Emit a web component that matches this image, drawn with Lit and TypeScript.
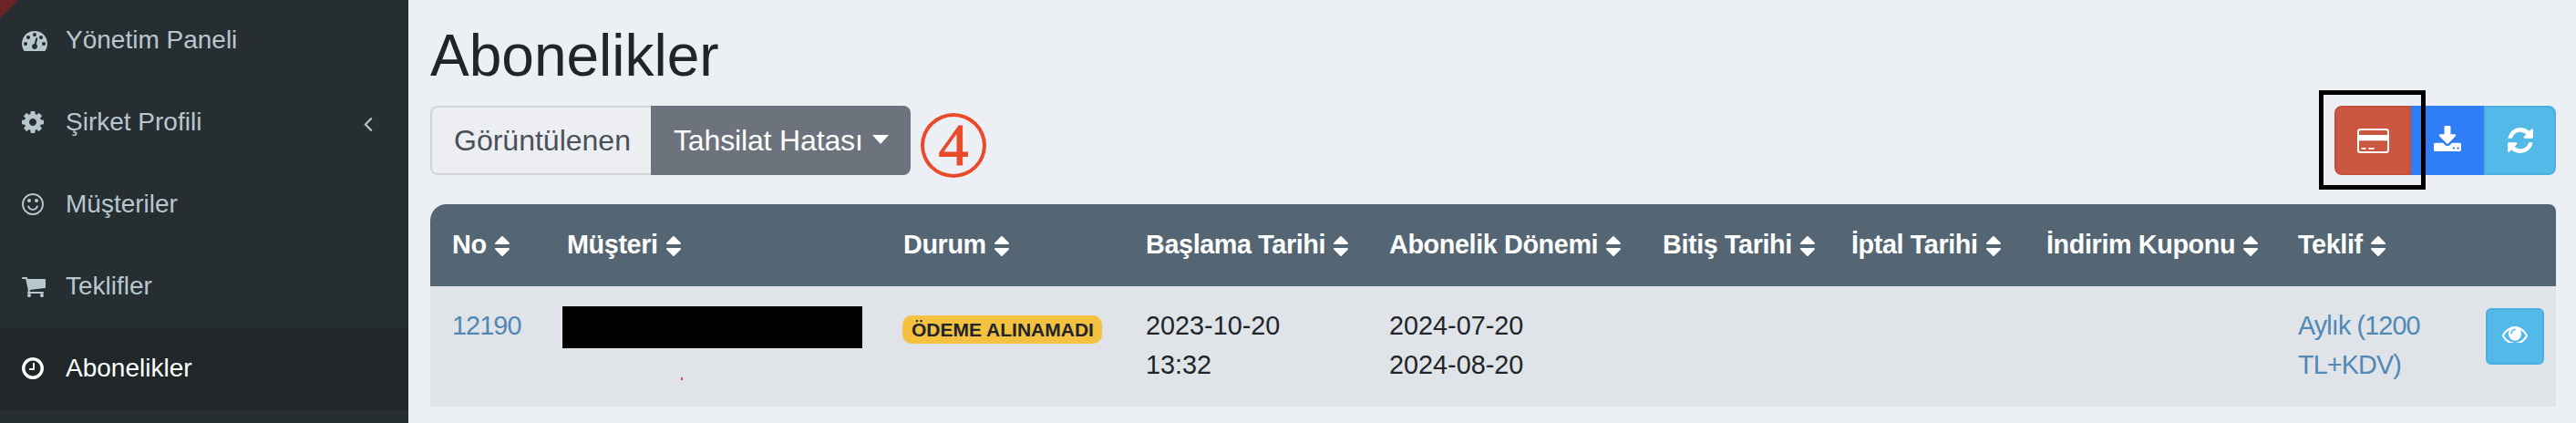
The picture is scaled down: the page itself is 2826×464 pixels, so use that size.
import { LitElement, html, css, svg } from "lit";
import { customElement } from "lit/decorators.js";

const P = {
  dash: "M384 1152q0-53-37.5-90.5t-90.5-37.5-90.5 37.5-37.5 90.5 37.5 90.5 90.5 37.5 90.5-37.5 37.5-90.5zm192-448q0-53-37.5-90.5t-90.5-37.5-90.5 37.5-37.5 90.5 37.5 90.5 90.5 37.5 90.5-37.5 37.5-90.5zm428 481l101-382q6-26-7.5-48.5t-38.5-29.5-48 6.5-30 39.5l-101 382q-60 5-107 43.5t-63 98.5q-20 77 20 146t117 89 146-20 89-117q16-60-6-117t-72-91zm660-33q0-53-37.5-90.5t-90.5-37.5-90.5 37.5-37.5 90.5 37.5 90.5 90.5 37.5 90.5-37.5 37.5-90.5zm-640-640q0-53-37.5-90.5t-90.5-37.5-90.5 37.5-37.5 90.5 37.5 90.5 90.5 37.5 90.5-37.5 37.5-90.5zm448 192q0-53-37.5-90.5t-90.5-37.5-90.5 37.5-37.5 90.5 37.5 90.5 90.5 37.5 90.5-37.5 37.5-90.5zm320 448q0 261-141 483-19 29-54 29h-1402q-35 0-54-29-141-221-141-483 0-182 71-348t191-286 286-191 348-71 348 71 286 191 191 286 71 348z",
  cog: "M1152 896q0-106-75-181t-181-75-181 75-75 181 75 181 181 75 181-75 75-181zm512-109v222q0 12-8 23t-20 13l-185 28q-19 54-39 91 35 50 107 138 10 12 10 25t-9 23q-27 37-99 108t-94 71q-12 0-26-9l-138-108q-44 23-91 38-16 136-29 186-7 28-36 28h-222q-14 0-24.5-8.5t-11.5-21.5l-28-184q-49-16-90-37l-141 107q-10 9-25 9-14 0-25-11-126-114-165-168-7-10-7-23 0-12 8-23 15-21 51-66.5t54-70.5q-27-50-41-99l-183-27q-13-2-21-12.5t-8-23.5v-222q0-12 8-23t19-13l186-28q14-46 39-92-40-57-107-138-10-12-10-24 0-10 9-23 26-36 98.5-107.5t94.5-71.5q13 0 26 10l138 107q44-23 91-38 16-136 29-186 7-28 36-28h222q14 0 24.5 8.5t11.5 21.5l28 184q49 16 90 37l142-107q9-9 24-9 13 0 25 10 129 119 165 170 7 8 7 22 0 12-8 23-15 21-51 66.5t-54 70.5q26 50 41 98l183 28q13 2 21 12.5t8 23.5z",
  smile: "M1262 1075q-37 121-138 195t-228 74-228-74-138-195q-8-25 4-48.5t38-31.5q25-8 48.5 4t31.5 38q25 80 92.5 129.5t151.5 49.5 151.5-49.5 92.5-129.5q8-26 32-38t49-4 37 31.5 4 48.5zm-494-435q0 53-37.5 90.5t-90.5 37.5-90.5-37.5-37.5-90.5 37.5-90.5 90.5-37.5 90.5 37.5 37.5 90.5zm512 0q0 53-37.5 90.5t-90.5 37.5-90.5-37.5-37.5-90.5 37.5-90.5 90.5-37.5 90.5 37.5 37.5 90.5zm256 256q0-130-51-248.5t-136.5-204-204-136.5-248.5-51-248.5 51-204 136.5-136.5 204-51 248.5 51 248.5 136.5 204 204 136.5 248.5 51 248.5-51 204-136.5 136.5-204 51-248.5zm128 0q0 209-103 385.5t-279.5 279.5-385.5 103-385.5-103-279.5-279.5-103-385.5 103-385.5 279.5-279.5 385.5-103 385.5 103 279.5 279.5 103 385.5z",
  cart: "M704 1536q0 52-38 90t-90 38-90-38-38-90 38-90 90-38 90 38 38 90zm896 0q0 52-38 90t-90 38-90-38-38-90 38-90 90-38 90 38 38 90zm128-1088v512q0 24-16.5 42.5t-40.5 21.5l-1044 122q13 60 13 70 0 16-24 64h920q26 0 45 19t19 45-19 45-45 19h-1024q-26 0-45-19t-19-45q0-11 8-31.5t16-36 21.5-40 15.5-29.5l-177-823h-204q-26 0-45-19t-19-45 19-45 45-19h256q16 0 28.5 6.5t19.5 15.5 13 24.5 8 26 5.5 29.5 4.5 26h1201q26 0 45 19t19 45z",
  clock: "M1024 544v448q0 14-9 23t-23 9h-320q-14 0-23-9t-9-23v-64q0-14 9-23t23-9h224v-352q0-14 9-23t23-9h64q14 0 23 9t9 23zm416 352q0-148-73-273t-198-198-273-73-273 73-198 198-73 273 73 273 198 198 273 73 273-73 198-198 73-273zm224 0q0 209-103 385.5t-279.5 279.5-385.5 103-385.5-103-279.5-279.5-103-385.5 103-385.5 279.5-279.5 385.5-103 385.5 103 279.5 279.5 103 385.5z",
  sort: "M1408 1088q0 26-19 45l-448 448q-19 19-45 19t-45-19l-448-448q-19-19-19-45t19-45 45-19h896q26 0 45 19t19 45zm0-384q0 26-19 45t-45 19h-896q-26 0-45-19t-19-45 19-45l448-448q19-19 45-19t45 19l448 448q19 19 19 45z",
  refresh: "M1639 1056q0 5-1 7-64 268-268 434.5t-478 166.5q-146 0-282.5-55t-243.5-157l-129 129q-19 19-45 19t-45-19-19-45v-448q0-26 19-45t45-19h448q26 0 45 19t19 45-19 45l-137 137q71 66 161 102t187 36q134 0 250-65t186-179q11-17 53-117 8-23 30-23h192q13 0 22.5 9.5t9.5 22.5zm25-800v448q0 26-19 45t-45 19h-448q-26 0-45-19t-19-45 19-45l138-138q-148-137-349-137-134 0-250 65t-186 179q-11 17-53 117-8 23-30 23h-199q-13 0-22.5-9.5t-9.5-22.5v-7q65-268 270-434.5t480-166.5q146 0 284 55.5t245 156.5l130-129q19-19 45-19t45 19 19 45z",
  download: "M1344 1344q0-26-19-45t-45-19-45 19-19 45 19 45 45 19 45-19 19-45zm256 0q0-26-19-45t-45-19-45 19-19 45 19 45 45 19 45-19 19-45zm128-224v320q0 40-28 68t-68 28h-1472q-40 0-68-28t-28-68v-320q0-40 28-68t68-28h465l135 136q58 56 136 56t136-56l136-136h464q40 0 68 28t28 68zm-325-569q17 41-14 70l-448 448q-18 19-45 19t-45-19l-448-448q-31-29-14-70 17-39 59-39h256v-448q0-26 19-45t45-19h256q26 0 45 19t19 45v448h256q42 0 59 39z",
  eye: "M1664 960q-152-236-381-353 61 104 61 225 0 185-131.5 316.5t-316.5 131.5-316.5-131.5-131.5-316.5q0-121 61-225-229 117-381 353 133 205 333.5 326.5t434.5 121.5 434.5-121.5 333.5-326.5zm-720-384q0-20-14-34t-34-14q-125 0-214.5 89.5t-89.5 214.5q0 20 14 34t34 14 34-14 14-34q0-86 61-147t147-61q20 0 34-14t14-34zm848 384q0 34-20 69-140 230-376.5 368.5t-499.5 138.5-499.5-139-376.5-368q-20-35-20-69t20-69q140-229 376.5-368t499.5-139 499.5 139 376.5 368q20 35 20 69z",
};

const icon = (d: string, vb: string, cls: string) =>
  html`<svg class=${cls} viewBox=${vb} preserveAspectRatio="none" fill="currentColor" aria-hidden="true">${svg`<path d=${d}></path>`}</svg>`;

const NAV = [
  { label: "Yönetim Paneli", d: P.dash, vb: "0 0 1792 1792", cls: "nv w28" },
  { label: "Şirket Profili", d: P.cog, vb: "128 0 1536 1792", cls: "nv w24", more: true },
  { label: "Müşteriler", d: P.smile, vb: "128 0 1536 1792", cls: "nv w24" },
  { label: "Teklifler", d: P.cart, vb: "64 0 1664 1792", cls: "nv w26" },
  { label: "Abonelikler", d: P.clock, vb: "128 0 1536 1792", cls: "nv w24", active: true },
];

const COLS = ["No", "Müşteri", "Durum", "Başlama Tarihi", "Abonelik Dönemi", "Bitiş Tarihi", "İptal Tarihi", "İndirim Kuponu", "Teklif"];

@customElement("app-root")
export class AppRoot extends LitElement {
  static styles = css`
    :host {
      display: flex;
      width: 2826px;
      height: 464px;
      overflow: hidden;
      background: #ecf0f5;
      font-family: "Liberation Sans", Arial, sans-serif;
      color: #212529;
    }
    * { box-sizing: border-box; }
    .side {
      flex: 0 0 448px;
      background: #262e32;
      position: relative;
    }
    .corner {
      position: absolute;
      left: 0;
      top: 0;
      width: 0;
      height: 0;
      border-top: 20px solid #6d2427;
      border-right: 20px solid transparent;
    }
    .item {
      height: 90px;
      display: flex;
      align-items: center;
      padding-left: 24px;
      font-size: 28px;
      color: #b8c7ce;
    }
    .item.active { background: #212729; color: #fff; }
    .ic { flex: 0 0 48px; display: flex; margin-top: -2px; }
    .nv { height: 28px; display: block; }
    .w28 { width: 28px; }
    .w24 { width: 24px; }
    .w26 { width: 26px; }
    .lbl { flex: 1; margin-top: -2px; }
    .chev { width: 10px; height: 17px; margin: 2px 39px 0 0; display: block; }
    main { flex: 1; min-width: 0; padding: 23px 22px 0 24px; }
    h1 {
      margin: 0 0 16px;
      font-size: 64px;
      font-weight: 400;
      line-height: 77px;
      color: #212529;
    }
    .bar {
      position: relative;
      display: flex;
      justify-content: space-between;
      height: 76px;
      margin-bottom: 32px;
    }
    .grp { display: flex; font-size: 32px; line-height: 48px; }
    .view {
      width: 242px;
      padding: 12px 0 12px 24px;
      border: 2px solid #d1d4d9;
      border-right: 0;
      border-radius: 8px 0 0 8px;
      background: #eceef2;
      color: #495057;
    }
    .sel {
      width: 285px;
      padding: 14px 0 0 25px;
      border-radius: 0 8px 8px 0;
      background: #6d737c;
      color: #fff;
      display: flex;
      white-space: nowrap;
      letter-spacing: -0.15px;
    }
    .caret {
      width: 0;
      height: 0;
      margin: 18px 0 0 10px;
      border-top: 10px solid #fff;
      border-left: 9px solid transparent;
      border-right: 9px solid transparent;
    }
    .mark {
      position: absolute;
      left: 538px;
      top: 8px;
      width: 72px;
      height: 71px;
      border: 4px solid #e94a2a;
      border-radius: 50%;
      color: #e94a2a;
      font-family: "Liberation Serif", serif;
      font-weight: 400;
      -webkit-text-stroke: 1px #e94a2a;
      font-size: 66px;
      line-height: 62px;
      text-align: center;
    }
    .tools { position: relative; display: flex; }
    .tool {
      height: 76px;
      display: flex;
      align-items: center;
      justify-content: center;
      color: #fff;
      border: 2px solid transparent;
    }
    .red { width: 84px; background: #cb5741; border-color: #c34f39; border-radius: 8px 0 0 8px; }
    .blue { width: 80px; background: #2f7ef6; border-color: #2f7ef6; }
    .cyan { width: 79px; background: #52b9e9; border-color: #4bb0df; border-radius: 0 8px 8px 0; }
    .dl { width: 30px; height: 28px; display: block; margin-top: -4px; }
    .rf { width: 28px; height: 28px; display: block; }
    .card { width: 35px; height: 27px; display: block; }
    .frame {
      position: absolute;
      left: -17px;
      top: -17px;
      width: 117px;
      height: 109px;
      border: 5px solid #000;
    }
    table {
      width: 2332px;
      table-layout: fixed;
      border-collapse: separate;
      border-spacing: 0;
      font-size: 28.8px;
      line-height: 43.2px;
    }
    .c1 { width: 126px; } .c2 { width: 369px; } .c3 { width: 266px; }
    .c4 { width: 267px; } .c5 { width: 300px; } .c6 { width: 207px; }
    .c7 { width: 214px; } .c8 { width: 276px; } .c9 { width: 218px; } .c10 { width: 89px; }
    th {
      height: 90px;
      padding: 0 0 0 24px;
      background: #546574;
      color: #fff;
      font-weight: 700;
      text-align: left;
      white-space: nowrap;
      letter-spacing: -0.4px;
    }
    th:first-child { border-top-left-radius: 18px; }
    th:last-child { border-top-right-radius: 8px; }
    .sort { width: 16px; height: 22px; display: inline-block; vertical-align: -3px; margin-left: 9px; }
    td {
      height: 132px;
      padding: 22px 0 0 24px;
      background: #e0e4e8;
      vertical-align: top;
    }
    a { color: #5088b6; text-decoration: none; letter-spacing: -0.9px; }
    .black { display: block; width: 329px; height: 46px; margin-left: -5px; background: #000; }
    .dot { display: block; width: 2px; height: 3px; margin: 32px 0 0 125px; background: #e0474a; }
    .badge {
      display: block;
      width: 219px;
      height: 31px;
      margin: 10px 0 0 -1px;
      padding-left: 10px;
      border-radius: 10px;
      background: #f4c140;
      color: #212529;
      font-size: 21px;
      font-weight: 700;
      line-height: 31px;
      white-space: nowrap;
    }
    .act { padding-left: 12px; }
    .eyebtn {
      width: 64px;
      height: 62px;
      margin-top: 2px;
      display: flex;
      align-items: center;
      justify-content: center;
      background: #52b9e9;
      border: 2px solid #4bb0df;
      border-radius: 6px;
      color: #fff;
    }
    .eye { width: 28px; height: 18px; display: block; margin-top: -4px; }
  `;

  render() {
    return html`
      <aside class="side">
        <div class="corner"></div>
        ${NAV.map(
          (n) => html`<div class="item ${n.active ? "active" : ""}">
            <span class="ic">${icon(n.d, n.vb, n.cls)}</span>
            <span class="lbl">${n.label}</span>
            ${n.more
              ? html`<svg class="chev" viewBox="0 0 10 18" fill="none" stroke="currentColor" stroke-width="2.2"><path d="M9 1.5 1.7 9 9 16.5"></path></svg>`
              : ""}
          </div>`
        )}
      </aside>
      <main>
        <h1>Abonelikler</h1>
        <div class="bar">
          <div class="grp">
            <div class="view">Görüntülenen</div>
            <div class="sel">Tahsilat Hatası<span class="caret"></span></div>
          </div>
          <div class="mark">4</div>
          <div class="tools">
            <div class="tool red">
              <svg class="card" viewBox="0 0 35 27" aria-hidden="true">
                <rect x="1" y="1" width="33" height="25" rx="2.5" fill="none" stroke="#fff" stroke-width="2"></rect>
                <rect x="1" y="7" width="33" height="6.3" fill="#fff"></rect>
                <rect x="4.7" y="21" width="4.7" height="1.8" fill="#fff"></rect>
                <rect x="12.3" y="21" width="6.4" height="1.8" fill="#fff"></rect>
              </svg>
            </div>
            <div class="tool blue">${icon(P.download, "64 0 1664 1536", "dl")}</div>
            <div class="tool cyan">${icon(P.refresh, "128 128 1536 1536", "rf")}</div>
            <div class="frame"></div>
          </div>
        </div>
        <table>
          <colgroup>
            ${[1, 2, 3, 4, 5, 6, 7, 8, 9, 10].map((i) => html`<col class="c${i}" />`)}
          </colgroup>
          <thead>
            <tr>
              ${COLS.map((c) => html`<th>${c}${icon(P.sort, "384 192 1024 1408", "sort")}</th>`)}
              <th></th>
            </tr>
          </thead>
          <tbody>
            <tr>
              <td><a>12190</a></td>
              <td><span class="black"></span><span class="dot"></span></td>
              <td><span class="badge">ÖDEME ALINAMADI</span></td>
              <td>2023-10-20<br />13:32</td>
              <td>2024-07-20<br />2024-08-20</td>
              <td></td>
              <td></td>
              <td></td>
              <td><a>Aylık (1200 TL+KDV)</a></td>
              <td class="act"><div class="eyebtn">${icon(P.eye, "0 384 1792 1024", "eye")}</div></td>
            </tr>
          </tbody>
        </table>
      </main>
    `;
  }
}
